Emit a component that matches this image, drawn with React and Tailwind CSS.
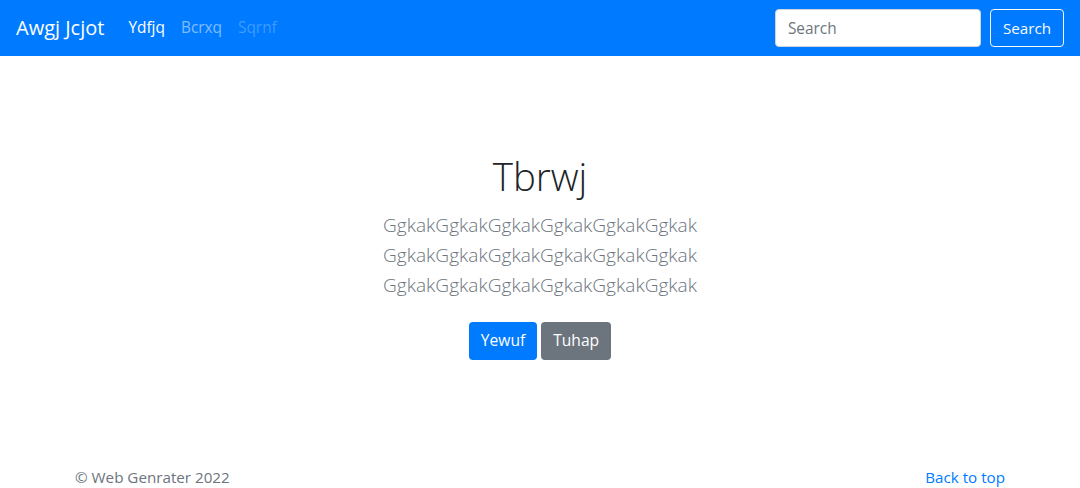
import React from 'react';

const font = { fontFamily: '"Open Sans", "Noto Sans", sans-serif' };

const NavBar = () => (
  <nav className="h-14 bg-[#007bff] flex items-center justify-between px-4">
    <div className="flex items-center">
      <a href="#" className="text-[20px] text-white leading-[30px] mr-4">Awgj Jcjot</a>
      <ul className="flex items-center text-[15.4px] leading-6">
        <li><a href="#" className="block px-2 py-2 text-white">Ydfjq</a></li>
        <li><a href="#" className="block px-2 py-2 text-white/50">Bcrxq</a></li>
        <li><span className="block px-2 py-2 text-white/25">Sqrnf</span></li>
      </ul>
    </div>
    <form className="flex items-center" onSubmit={(e) => e.preventDefault()}>
      <input
        type="text"
        placeholder="Search"
        className="w-[206px] h-[38px] px-3 bg-white border border-[#ced4da] rounded text-[15.4px] text-[#495057] placeholder:text-[#6c757d] mr-[9px] outline-none"
      />
      <button type="submit" className="h-[38px] px-3 border border-[#f8f9fa] rounded text-[#f8f9fa] text-[15.2px]">
        Search
      </button>
    </form>
  </nav>
);

const Hero = () => (
  <section className="pt-24 pb-24 text-center">
    <div className="mx-auto max-w-[610px]">
      <h1 className="text-[38.5px] font-light leading-[48px] text-[#212529] mb-[10px]">Tbrwj</h1>
      <p className="text-[19.1px] font-light leading-[30px] text-[#6c757d] mb-[22px]">
        GgkakGgkakGgkakGgkakGgkakGgkak GgkakGgkakGgkakGgkakGgkakGgkak GgkakGgkakGgkakGgkakGgkakGgkak
      </p>
      <p className="flex justify-center gap-1">
        <a href="#" className="h-[38px] px-3 flex items-center rounded bg-[#007bff] text-white text-[15.6px]">Yewuf</a>
        <a href="#" className="h-[38px] px-3 flex items-center rounded bg-[#6c757d] text-white text-[15.6px]">Tuhap</a>
      </p>
    </div>
  </section>
);

const Footer = () => (
  <footer className="pt-[9px] pb-12 text-[#6c757d]">
    <div className="mx-auto max-w-[960px] px-[15px] flex justify-between text-[15.2px] leading-6">
      <p>© Web Genrater 2022</p>
      <p><a href="#" className="text-[#007bff]">Back to top</a></p>
    </div>
  </footer>
);

export default function App() {
  return (
    <div className="min-h-screen bg-white" style={font}>
      <NavBar />
      <Hero />
      <Footer />
    </div>
  );
}
